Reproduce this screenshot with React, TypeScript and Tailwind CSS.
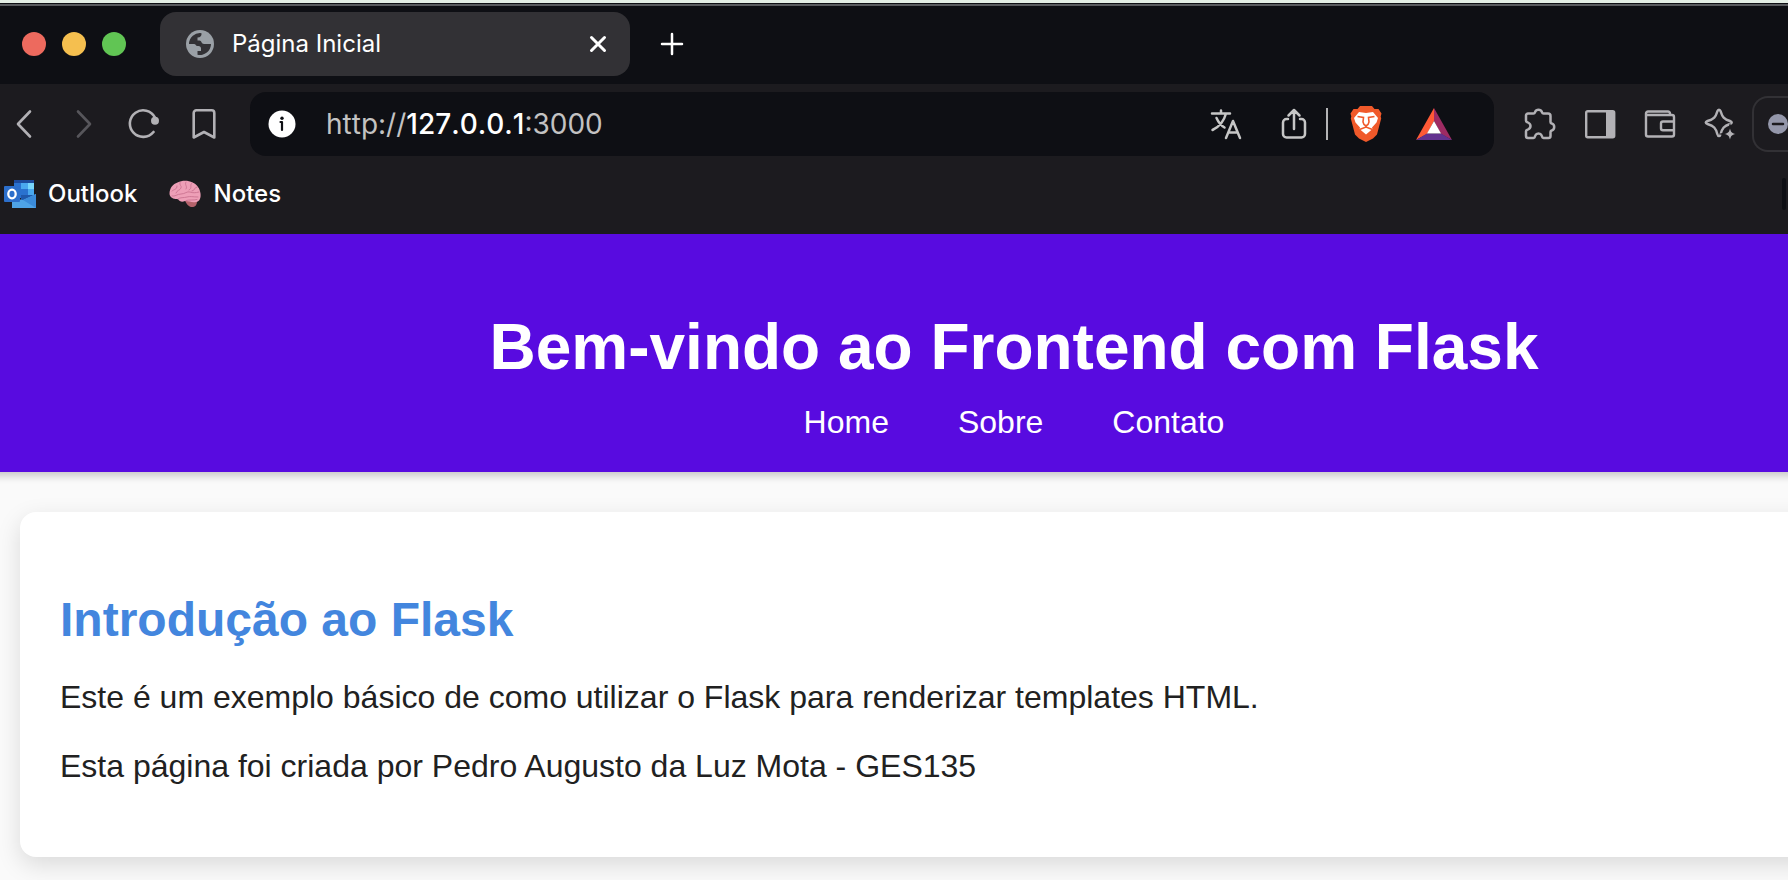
import type { ReactNode } from "react";

function IconButton({ label, className, children }: { label: string; className?: string; children: ReactNode }) {
  return (
    <button type="button" aria-label={label} className={`flex shrink-0 items-center justify-center ${className ?? ""}`}>
      {children}
    </button>
  );
}

function TabStrip() {
  return (
    <div className="flex items-center bg-[#0e0f14] pt-1.5 pb-2">
      <div className="ml-[22px] flex gap-4">
        <button type="button" aria-label="Fechar janela" className="size-6 rounded-full bg-[#ed6a5e]" />
        <button type="button" aria-label="Minimizar" className="size-6 rounded-full bg-[#f5bf4f]" />
        <button type="button" aria-label="Maximizar" className="size-6 rounded-full bg-[#61c554]" />
      </div>
      <div className="ml-[34px] flex h-16 w-[470px] items-center rounded-2xl bg-[#323135] pr-5 pl-[26px]">
        <svg className="size-7 shrink-0" viewBox="0 0 28 28" aria-hidden="true">
          <circle cx="14" cy="14" r="14" fill="#9aa0a6" />
          <path d="M3 14A11 11 0 0 1 15.500 3.200C15.800 6 14.500 7.200 11.500 7.500V10.500H13.500C15.500 10.500 15.500 14 18 14H25A11 11 0 0 1 11.500 24.700V21H15V18.500C15 17 14 16 12.500 16H11.500C9.500 16 10 14 8 14Z" fill="#323135" />
        </svg>
        <span className="ml-[18px] flex-1 text-2xl text-white">Página Inicial</span>
        <IconButton label="Fechar guia" className="size-6">
          <svg className="size-6" viewBox="0 0 24 24" stroke="#fff" strokeWidth="3" strokeLinecap="round" aria-hidden="true">
            <path d="M5.500 5.500l13 13M18.500 5.500l-13 13" />
          </svg>
        </IconButton>
      </div>
      <IconButton label="Nova guia" className="ml-[30px] size-6">
        <svg className="size-6" viewBox="0 0 24 24" stroke="#fff" strokeWidth="2.500" strokeLinecap="round" aria-hidden="true">
          <path d="M12 2v20M2 12h20" />
        </svg>
      </IconButton>
    </div>
  );
}

function BraveIcon() {
  return (
    <svg className="h-9 w-8" viewBox="0 0 32 36" aria-hidden="true">
      <path d="M10 0h12l2.500 3h4l3 4.500-.8 3 .5 2-4.200 16L23 32.500 16 36l-7-3.500L5 28.500.8 12.500l.5-2-.8-3L3.500 3h4z" fill="#f0592a" />
      <path d="M9 6l7 1 7-1 5 6-1.500 4.500-4.500 5 .5 1.500-6.500 5.500L9.500 23l.5-1.500-4.500-5L4 12z" fill="#fff" />
      <path d="M7.500 10.500l6 1-.5 4.500 1 2.500L16 20l2-1.500 1-2.500-.5-4.500 6-1M9.500 23.500l6.500-2.500 6.500 2.500" fill="none" stroke="#f0592a" strokeWidth="1.600" />
    </svg>
  );
}

function Toolbar() {
  return (
    <div className="flex items-center overflow-hidden py-2">
      <IconButton label="Voltar" className="ml-3 size-6">
        <svg className="h-8 w-6" viewBox="0 0 24 32" fill="none" stroke="#b2b1b5" strokeWidth="2.600" strokeLinecap="round" strokeLinejoin="round" aria-hidden="true">
          <path d="M18 3.500L6 16l12 12.500" />
        </svg>
      </IconButton>
      <IconButton label="Avançar" className="ml-9 size-6">
        <svg className="h-8 w-6" viewBox="0 0 24 32" fill="none" stroke="#57565b" strokeWidth="2.600" strokeLinecap="round" strokeLinejoin="round" aria-hidden="true">
          <path d="M6 3.500L18 16 6 28.500" />
        </svg>
      </IconButton>
      <IconButton label="Recarregar" className="ml-8 size-8">
        <svg className="size-8" viewBox="0 0 32 32" fill="none" aria-hidden="true">
          <path d="M25.500 24A13.300 13.300 0 1 1 27 9.500" stroke="#b2b1b5" strokeWidth="2.600" strokeLinecap="round" />
          <circle cx="27" cy="12.800" r="4" fill="#b2b1b5" />
        </svg>
      </IconButton>
      <IconButton label="Adicionar favorito" className="ml-7 size-8">
        <svg className="size-8" viewBox="0 0 32 32" fill="none" stroke="#b2b1b5" strokeWidth="2.600" strokeLinejoin="round" aria-hidden="true">
          <path d="M8.300 2.300h15.400a2.600 2.600 0 0 1 2.600 2.600v24.600L16 24 5.700 29.500V4.900a2.600 2.600 0 0 1 2.600-2.600z" />
        </svg>
      </IconButton>

      <div className="ml-[30px] flex h-16 min-w-0 flex-1 items-center rounded-2xl bg-[#0e0f14] pr-[42px] pl-[18px]">
        <IconButton label="Informações do site" className="size-7">
          <svg className="size-7" viewBox="0 0 28 28" aria-hidden="true">
            <circle cx="14" cy="14" r="13.500" fill="#fff" />
            <circle cx="14" cy="8.300" r="1.700" fill="#0e0f14" />
            <path d="M12.500 12H14v8" fill="none" stroke="#0e0f14" strokeWidth="2.200" strokeLinecap="round" strokeLinejoin="round" />
          </svg>
        </IconButton>
        <a href="http://127.0.0.1:3000" className="ml-[30px] flex-1 text-[28px] leading-9 text-[#c3c2c2] [font-kerning:none]">
          http://<span className="font-medium text-white">127.0.0.1</span>:3000
        </a>
        <IconButton label="Traduzir" className="size-8">
          <svg className="size-8" viewBox="0 0 32 32" fill="none" stroke="#c6c6c6" strokeWidth="2.500" strokeLinecap="round" strokeLinejoin="round" aria-hidden="true">
            <path d="M2 5.500h18M11 2.500v3M16 5.500C14 13 9 19 2.500 22M6.500 10c2 4.500 5.500 8 8 9.500M16 30l7-17 7 17M18.500 24.500h9" />
          </svg>
        </IconButton>
        <IconButton label="Compartilhar" className="ml-9 size-8">
          <svg className="size-8" viewBox="0 0 32 32" fill="none" stroke="#c6c6c6" strokeWidth="2.500" strokeLinecap="round" strokeLinejoin="round" aria-hidden="true">
            <path d="M10 11H8.500A3.500 3.500 0 0 0 5 14.500V26a3.500 3.500 0 0 0 3.500 3.500h15A3.500 3.500 0 0 0 27 26V14.500a3.500 3.500 0 0 0-3.500-3.500H22M16 21V2M10.500 7.500L16 2l5.500 5.500" />
          </svg>
        </IconButton>
        <span className="ml-4 h-8 w-0.5 shrink-0 bg-[#b4b4b6]" />
        <IconButton label="Brave Shields" className="ml-[22px] h-9 w-8">
          <BraveIcon />
        </IconButton>
        <IconButton label="Brave Rewards" className="ml-[34px] size-9">
          <svg className="size-9" viewBox="0 0 36 36" aria-hidden="true">
            <path d="M18 2v13L11 28 0 34z" fill="#ff5a36" />
            <path d="M18 2v13l7 13 11 6z" fill="#9e2b63" />
            <path d="M0 34l11-6.500h14L36 34z" fill="#63328f" />
            <path d="M18 15l7 12.500H11z" fill="#fff" />
          </svg>
        </IconButton>
      </div>

      <div className="ml-[30px] flex shrink-0 gap-7">
        <IconButton label="Extensões" className="size-8">
          <svg className="size-8" viewBox="0 0 32 32" fill="none" stroke="#b2b1b5" strokeWidth="2.500" strokeLinejoin="round" aria-hidden="true">
            <path d="M4 5.500h5.500c1.300 0 1.200-.5 1.700-1.800.6-1.400 1.700-2 3.300-2s2.700.6 3.300 2c.5 1.300.4 1.800 1.700 1.800H24a2.500 2.500 0 0 1 2.500 2.500v6c0 1.300.5 1.200 1.700 1.700 1.400.6 2 1.700 2 3.300s-.6 2.700-2 3.300c-1.200.5-1.700.4-1.700 1.700v4a2 2 0 0 1-2 2h-5c-1.800 0-1-1-1.800-2.500-.6-1.300-1.700-2-3.200-2s-2.600.7-3.200 2C10.500 29 11.300 30 9.500 30H4a2 2 0 0 1-2-2v-4.500c0-1.500.5-1.200 2-2 1.600-.8 2.500-2 2.500-3.500S5.600 15.300 4 14.500c-1.500-.8-2-.5-2-2v-5a2 2 0 0 1 2-2z" />
          </svg>
        </IconButton>
        <IconButton label="Painel lateral" className="size-8">
          <svg className="size-8" viewBox="0 0 32 32" fill="none" aria-hidden="true">
            <rect x="2.200" y="3.200" width="28" height="26" rx="1.500" stroke="#b2b1b5" strokeWidth="2.400" />
            <path d="M22 3h8v26h-8z" fill="#b2b1b5" />
          </svg>
        </IconButton>
        <IconButton label="Carteira" className="size-8">
          <svg className="size-8" viewBox="0 0 32 32" fill="none" stroke="#b2b1b5" strokeWidth="2.400" strokeLinejoin="round" aria-hidden="true">
            <path d="M26 7V5.500a2 2 0 0 0-2-2H4a2 2 0 0 0-2 2v21a2 2 0 0 0 2 2h24a2 2 0 0 0 2-2V9a2 2 0 0 0-2-2H3" />
            <path d="M30 13.500H19a2 2 0 0 0-2 2v4.800a2 2 0 0 0 2 2h11" />
          </svg>
        </IconButton>
        <IconButton label="Leo AI" className="size-8">
          <svg className="size-8" viewBox="0 0 32 32" aria-hidden="true">
            <path d="M13.300 3.500c.8-2.300 2.600-2.300 3.400 0 1.600 5.500 3.300 7.500 9.300 9.500 2.300.8 2.300 2.300 0 3-6 2-7.700 4-9.300 10-.8 2.800-2.600 2.800-3.400 0C11.700 20 10 18 3.500 16c-2.300-.7-2.300-2.200 0-3 6.500-2 8.200-4 9.800-9.500z" fill="none" stroke="#b2b1b5" strokeWidth="2.500" />
            <path d="M26 20.500c1 3.800 1.700 4.500 5.500 5.500-3.800 1-4.500 1.700-5.500 5.500-1-3.800-1.700-4.500-5.500-5.500 3.800-1 4.500-1.700 5.500-5.500z" fill="#b2b1b5" stroke="#1c1b1f" strokeWidth="3" paintOrder="stroke" />
          </svg>
        </IconButton>
      </div>
      <button type="button" aria-label="VPN" className="ml-4 flex h-14 w-9 shrink-0 items-center rounded-l-2xl border-2 border-r-0 border-[#323135] pl-3.5">
        <svg className="size-5 shrink-0" viewBox="0 0 20 20" aria-hidden="true">
          <circle cx="10" cy="10" r="10" fill="#9497aa" />
          <path d="M5 10h10" stroke="#1c1b1f" strokeWidth="2.500" strokeLinecap="round" />
        </svg>
      </button>
    </div>
  );
}

function OutlookIcon() {
  return (
    <svg className="size-8" viewBox="0 0 32 32" aria-hidden="true">
      <path d="M10 2h20v18H10z" fill="#2a72cf" />
      <path d="M10 2h20v3H10z" fill="#1d4a9c" />
      <path d="M17 5h7v6h-7z" fill="#4aa8ee" />
      <path d="M24 5h6v6h-6z" fill="#78d6fb" />
      <path d="M24 11h6v6h-6z" fill="#4aa8ee" />
      <path d="M17 17h13l-9 6h-4z" fill="#1f58ab" />
      <path d="M8 20l11 2 13-6v14H8z" fill="#4ea3e6" />
      <path d="M32 16v14L19 22z" fill="#3b8bd9" />
      <rect x="0" y="8" width="16" height="16" rx="1" fill="#2c6fcb" />
      <ellipse cx="8" cy="16" rx="3.700" ry="4.300" fill="none" stroke="#fff" strokeWidth="2.300" />
    </svg>
  );
}

function BrainIcon() {
  return (
    <svg className="size-8" viewBox="0 0 32 32" aria-hidden="true">
      <path d="M16 22c1 4 4 7.500 8 7 3-.5 4-3 4-6z" fill="#b5626b" />
      <path d="M.5 16C.5 10 4 6 8.500 4.500c5-2.500 11-2 15 0 4.500 2 7.500 6 8 11 .5 4-.5 8-4.500 8.500-4 .8-7-1-11-1-3 1.500-5.500.5-7-2-3.500.5-8-1-8.500-5z" fill="#ee9fb7" />
      <path d="M3 13c2-2 5-1 5-5M11 4.500c-1 3 2 3 1 5.500s-4 2-5 5M17 4c-2 3 2 4 0 7M23 5c-3 2 1 5-3 7M28 9c-3 0-2 4-5 4M3 18c3 1 5-2 9-2s6-3 9-2 5 1 9 0M9 21c2-2 6-1 9-2s6 0 11 0M17 22.500c3-1 7 0 11-1" fill="none" stroke="#cf7895" strokeWidth="1" strokeLinecap="round" />
    </svg>
  );
}

function Bookmarks() {
  return (
    <nav aria-label="Favoritos" className="flex h-[70px] items-start pt-3.5 pl-1">
      <a href="#outlook" className="flex h-8 items-center gap-3 text-2xl font-medium text-white">
        <OutlookIcon />
        Outlook
      </a>
      <a href="#notes" className="ml-8 flex h-8 items-center gap-3 text-2xl font-medium text-white">
        <BrainIcon />
        Notes
      </a>
      <span className="mr-0.5 ml-auto h-8 w-1 rounded-full bg-[#0e0f14]" />
    </nav>
  );
}

export default function App() {
  return (
    <div className="flex min-h-screen flex-col overflow-x-hidden bg-[#fafafa]">
      <div className="bg-[#1c1b1f] font-[Inter,sans-serif]">
        <div className="h-[3px] bg-[#e4efe6]" />
        <div className="h-[3px] border-t border-[#0e0f14] bg-[#595b5f]" />
        <TabStrip />
        <Toolbar />
        <Bookmarks />
      </div>

      <div className="flex-1 font-['Liberation_Sans',Arial,sans-serif] text-[32px] leading-[37px]">
        <header className="-mx-10 bg-[#580be0] pt-20 pr-10 pb-[31px] pl-[280px] text-center text-white shadow-[0_4px_8px_rgba(0,0,0,0.2)]">
          <h1 className="text-[64px] leading-[66px] font-bold">Bem-vindo ao Frontend com Flask</h1>
          <nav aria-label="Principal" className="mt-6 flex justify-center gap-[69px]">
            <a href="#home">Home</a>
            <a href="#sobre">Sobre</a>
            <a href="#contato">Contato</a>
          </nav>
        </header>
        <main className="mt-10 -mr-10 ml-5 rounded-2xl bg-white px-10 pt-20 pb-[72px] text-[#212121] shadow-[0_8px_24px_rgba(0,0,0,0.13)]">
          <h2 className="text-5xl leading-[55px] font-bold text-[#4386de]">Introdução ao Flask</h2>
          <p className="mt-8">Este é um exemplo básico de como utilizar o Flask para renderizar templates HTML.</p>
          <p className="mt-8">Esta página foi criada por Pedro Augusto da Luz Mota - GES135</p>
        </main>
      </div>
    </div>
  );
}
